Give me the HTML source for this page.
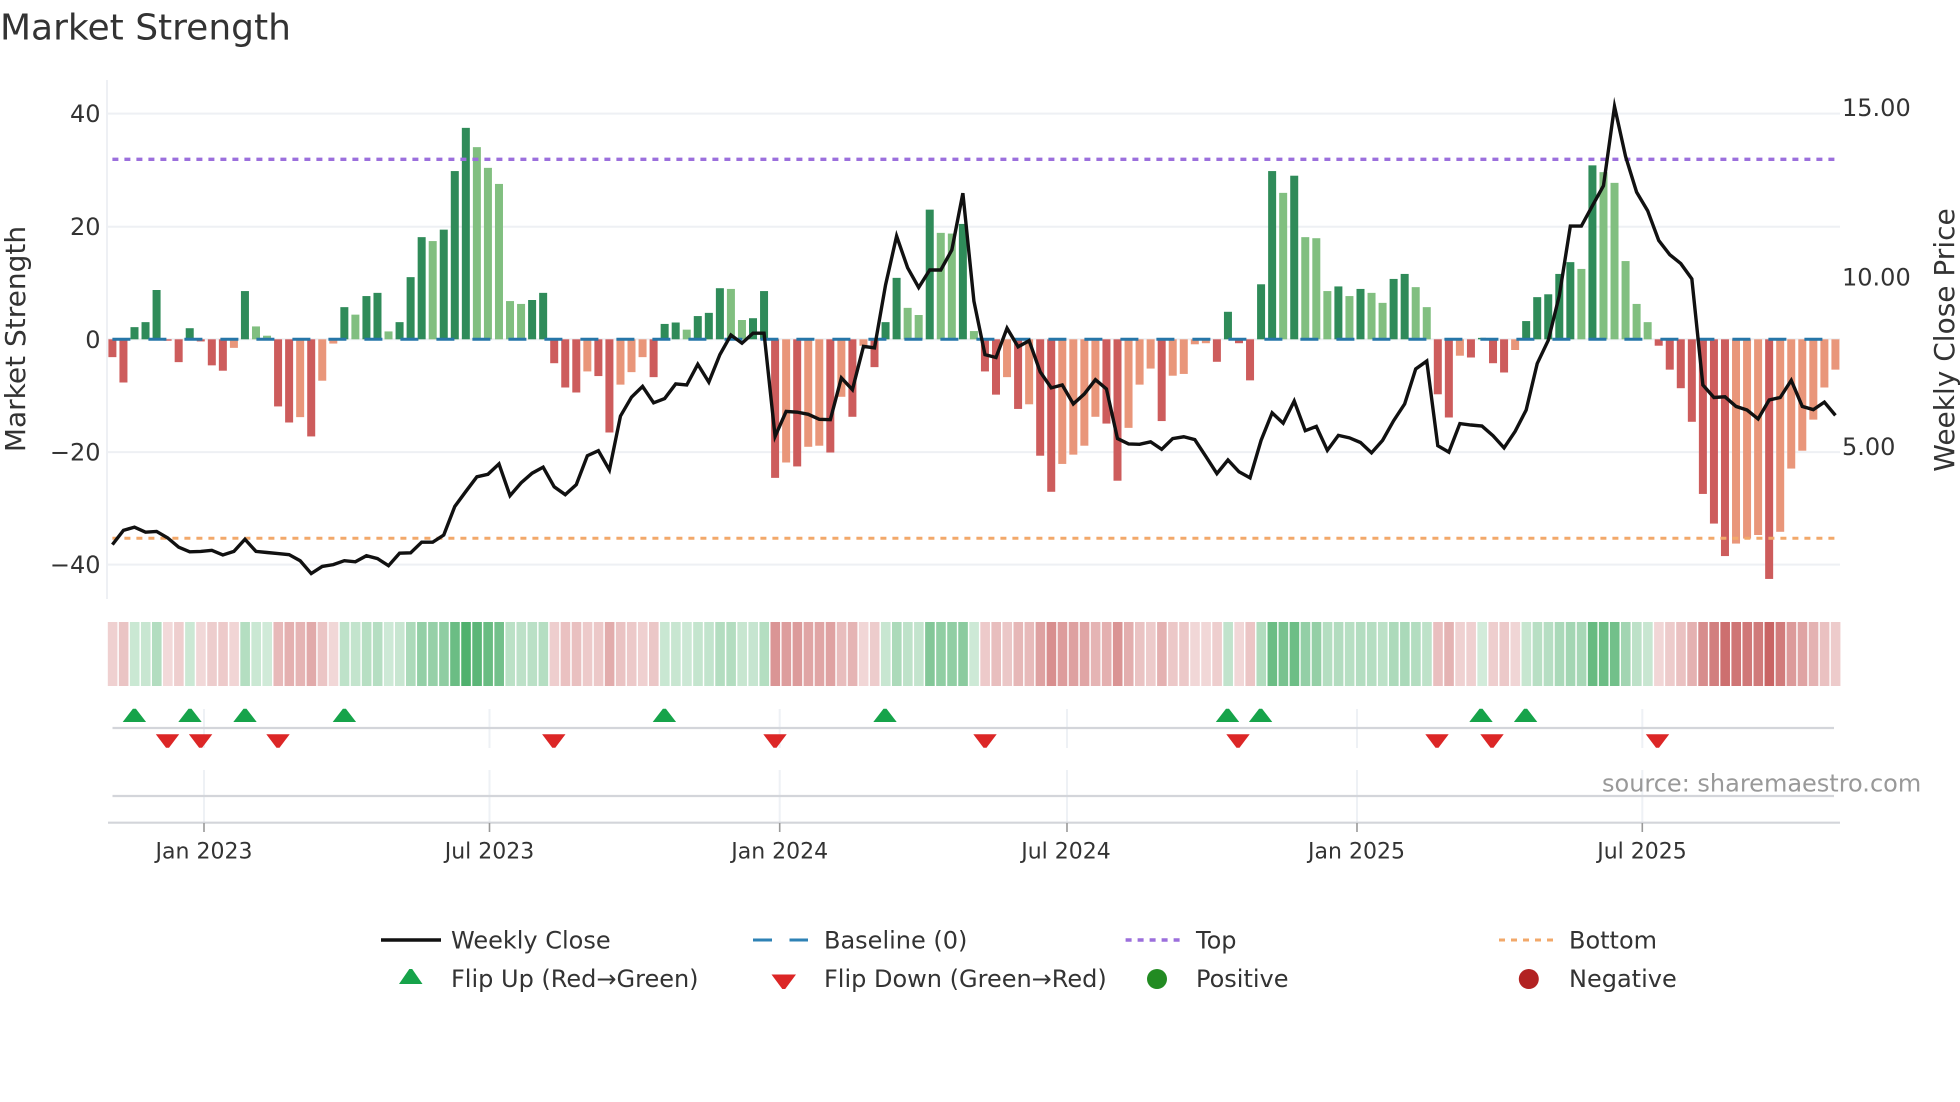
<!DOCTYPE html>
<html><head><meta charset="utf-8"><title>Market Strength</title>
<style>
html,body{margin:0;padding:0;background:#fff;width:1960px;height:1102px;overflow:hidden}
svg{display:block}
text{font-family:"DejaVu Sans","Liberation Sans",sans-serif;fill:#333}
.t{font-size:24px}.d{font-size:22px}.a{font-size:28px}
</style></head><body>
<svg id="c" xmlns="http://www.w3.org/2000/svg" width="1960" height="1102" viewBox="0 0 1960 1102">
<rect width="1960" height="1102" fill="#fff"/>
<g stroke="#eef0f4" stroke-width="2" fill="none">
<path d="M107 80V599"/>
<path d="M107 113.6H1840M107 226.8H1840M107 339.3H1840M107 452.1H1840M107 564.6H1840"/>
</g>
<g id="bars"></g>
<path d="M112.4 339.3H1835" stroke="#2676a8" stroke-width="3" stroke-dasharray="18 18" fill="none"/>
<path d="M112.4 159.3H1834.5" stroke="#9b6fdc" stroke-width="3.4" stroke-dasharray="6 6" fill="none"/>
<path d="M112.4 538.2H1834.5" stroke="#f2a86a" stroke-width="3" stroke-dasharray="6 6" fill="none"/>
<polyline id="line" fill="none" stroke="#111" stroke-width="3.4" stroke-linejoin="miter" stroke-miterlimit="6"/>
<g id="strip"></g>
<g stroke="#eef1f5" stroke-width="2" fill="none">
<path d="M204 709V748M204 770V823M489.5 709V748M489.5 770V823M779.7 709V748M779.7 770V823M1067 709V748M1067 770V823M1357 709V748M1357 770V823M1642.3 709V748M1642.3 770V823"/>
</g>
<g stroke="#d3d5da" stroke-width="2.2" fill="none">
<path d="M112.5 728H1834M112.5 796H1834M108 822.7H1840"/>
</g>
<path d="M204 823V832M489.5 823V832M779.7 823V832M1067 823V832M1357 823V832M1642.3 823V832" stroke="#999" stroke-width="1.6" fill="none"/>
<g id="tri"></g>
<text class="a" style="font-size:36px" x="0" y="39.3">Market Strength</text>
<g class="t" text-anchor="end">
<text class="t" x="100.5" y="122.2">40</text>
<text class="t" x="100.5" y="235.2">20</text>
<text class="t" x="100.5" y="347.8">0</text>
<text class="t" x="100.5" y="460.5">−20</text>
<text class="t" x="100.5" y="573">−40</text>
</g>
<text class="t" x="1842" y="116">15.00</text>
<text class="t" x="1842" y="285.5">10.00</text>
<text class="t" x="1842" y="455">5.00</text>
<text class="a" text-anchor="middle" transform="translate(25,339) rotate(-90)">Market Strength</text>
<text class="a" text-anchor="middle" transform="translate(1954,340) rotate(-90)">Weekly Close Price</text>
<g text-anchor="middle">
<text class="d" x="204" y="858.5">Jan 2023</text>
<text class="d" x="489.5" y="858.5">Jul 2023</text>
<text class="d" x="779.7" y="858.5">Jan 2024</text>
<text class="d" x="1066" y="858.5">Jul 2024</text>
<text class="d" x="1356.5" y="858.5">Jan 2025</text>
<text class="d" x="1642" y="858.5">Jul 2025</text>
</g>
<text class="t" x="1602" y="791.5" style="fill:#999">source: sharemaestro.com</text>
<path d="M381 940H441" stroke="#111" stroke-width="3.6" fill="none"/>
<path d="M753 940H772M789.5 940H808" stroke="#2e82b5" stroke-width="3" fill="none"/>
<path d="M1125.6 940H1181" stroke="#9b6fdc" stroke-width="3.4" stroke-dasharray="6 6" fill="none"/>
<path d="M1499 940H1554" stroke="#f2a86a" stroke-width="3" stroke-dasharray="6 6" fill="none"/>
<polygon points="399,984 422.5,984 412.2,969 409.3,969" fill="#16a34a"/>
<polygon points="771.5,974.5 796,974.5 785.2,989 782.3,989" fill="#dc2626"/>
<ellipse cx="1157" cy="979" rx="10" ry="10" fill="#228b22"/>
<ellipse cx="1528.8" cy="979" rx="10" ry="10" fill="#b22222"/>
<text class="t" x="451" y="948.5">Weekly Close</text>
<text class="t" x="824" y="948.5">Baseline (0)</text>
<text class="t" x="1196" y="948.5">Top</text>
<text class="t" x="1569" y="948.5">Bottom</text>
<text class="t" x="451" y="986.8">Flip Up (Red→Green)</text>
<text class="t" x="824" y="986.8">Flip Down (Green→Red)</text>
<text class="t" x="1196" y="986.8">Positive</text>
<text class="t" x="1569" y="986.8">Negative</text>
</svg>
<script>
(function(){
var B="R832 R903 G748 G734 G644 R786 R846 G751 R788 R855 R870 r806 G647 g746 g772 R970 R1015 r1000 R1054 r898 r794 G692 g713 G661 G652 g760 G734 G608 G496 g507 G475 G311 G190 g244 g302 g347 g675 g683 G672 G652 R849 R917 R931 r872 R885 R1043 r909 r874 r832 R888 G739 G735 g755 G717 G708 G639 g641 g728 G723 G647 R1170 r1127 R1138 r1083 r1080 R1099 r943 R999 r800 R860 G734 G610 g694 g714 G419 g484 g486 G459 g759 R872 R937 r888 R977 r964 R1108 R1209 r1131 r1105 r1080 r999 R1018 R1178 r1030 r909 r864 R1011 r884 r879 r796 r793 R845 G705 R793 R897 G628 G311 g372 G324 g496 g499 g647 G634 g661 G641 g652 g680 G613 G599 g636 g692 R936 R1001 r828 R833 G778 R849 R875 r812 G731 G664 G656 G599 G566 g585 G295 g314 g344 g563 g683 g734 R800 R867 R919 R1013 R1215 R1298 R1389 r1354 r1340 r1330 R1453 r1321 r1144 r1094 r1007 r917 r867".split(" ");
var L=[1357,1317,1308,1322,1320,1338,1364,1377,1376,1373,1386,1376,1342,1376,1379,1382,1385,1402,1438,1418,1413,1402,1405,1388,1396,1416,1381,1380,1350,1350,1330,1250,1208,1167,1160,1131,1220,1184,1157,1140,1195,1217,1189,1108,1094,1148,997,944,914,960,948,907,910,852,902,825,770,793,765,765,1054,984,986,992,1006,1007,890,923,802,806,630,493,582,637,588,588,532,373,675,825,833,751,803,786,873,918,910,963,935,895,921,1060,1075,1076,1069,1090,1060,1055,1063,1110,1158,1120,1153,1170,1065,988,1017,955,1038,1026,1093,1051,1058,1071,1100,1065,1010,963,865,843,1080,1098,1018,1022,1025,1052,1086,1040,980,850,785,660,465,465,408,352,130,270,370,422,505,545,570,613,910,945,943,970,980,1005,952,945,897,970,979,958,995];
var col={G:"#2f8b59",g:"#81bf80",R:"#cd5c5c",r:"#e9967a"},h="",s="",i;
function X(i){return 112.4+11.045*i}
for(i=0;i<B.length;i++){
 var t=B[i][0],y=+B[i].slice(1),Y=y/2.8+60,x=X(i),top=Math.min(Y,339.3),ht=Math.abs(Y-339.3);
 h+='<rect x="'+(x-4).toFixed(2)+'" y="'+top.toFixed(2)+'" width="8" height="'+ht.toFixed(2)+'" fill="'+col[t]+'"/>';
 var v=ht/5.63,pos=(t=="G"||t=="g"),a=pos?0.19+0.0148*v:0.17+0.0125*v;
 var c=pos?"rgba(20,150,60,"+a.toFixed(3)+")":"rgba(178,34,34,"+a.toFixed(3)+")";
 s+='<rect x="'+(x-4.6).toFixed(2)+'" y="622" width="9.6" height="64" fill="'+c+'"/>';
}
document.getElementById("bars").innerHTML=h;
document.getElementById("strip").innerHTML=s;
var p=[];for(i=0;i<L.length;i++)p.push(X(i).toFixed(2)+","+(L[i]/2.8+60).toFixed(2));
document.getElementById("line").setAttribute("points",p.join(" "));
var U=[134.4,190,245,344.4,664.4,885,1227.5,1260.6,1481,1525.6],D=[167.5,200.6,278,553.8,775,985,1238,1437,1492,1657.5],T="";
U.forEach(function(c){T+='<polygon fill="#16a34a" points="'+(c-11.7)+',722 '+(c+11.7)+',722 '+(c+1.5)+',708.7 '+(c-1.5)+',708.7"/>'});
D.forEach(function(c){T+='<polygon fill="#dc2626" points="'+(c-11.7)+',734.3 '+(c+11.7)+',734.3 '+(c+1.5)+',747.7 '+(c-1.5)+',747.7"/>'});
document.getElementById("tri").innerHTML=T;
})();
</script>
</body></html>
